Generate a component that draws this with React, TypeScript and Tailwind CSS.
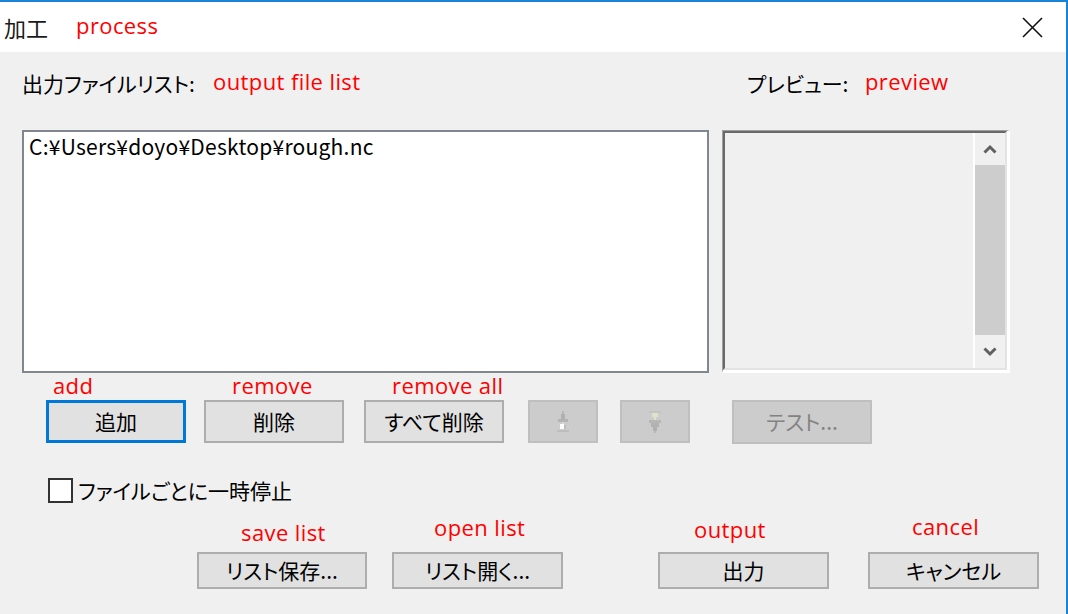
import React from 'react';

const jp = "[font-family:'Noto_Sans_CJK_JP',sans-serif] [font-feature-settings:'palt']";
const note = "[font-family:'Open_Sans',sans-serif] text-[22px] leading-[24px] tracking-[0.4px] text-[#ff0000]";

const Button = ({ label, width, focused }: { label: string; width: string; focused?: boolean }) => (
  <div
    className={`${width} h-[43px] flex items-center justify-center bg-[#e1e1e1] text-[21px] text-black ${
      focused ? 'border-[3px] border-[#0078d7]' : 'border-2 border-[#adadad]'
    }`}
  >
    {label}
  </div>
);

const UpGlyph = () => (
  <svg width="14" height="22" viewBox="0 0 14 22" shapeRendering="crispEdges">
    <rect x="6" y="0" width="2" height="3" fill="#b8b8b8" />
    <rect x="5" y="3" width="4" height="5" fill="#b0b0b0" />
    <rect x="2" y="8" width="10" height="3" fill="#b4b4b4" />
    <rect x="6" y="11" width="2" height="2" fill="#dcdcc8" />
    <rect x="4" y="13" width="4" height="5" fill="#ffffff" />
    <rect x="8" y="14" width="2" height="4" fill="#bcbcbc" />
    <rect x="1" y="19" width="12" height="2" fill="#bdbdbd" />
  </svg>
);

const DownGlyph = () => (
  <svg width="14" height="22" viewBox="0 0 14 22" shapeRendering="crispEdges">
    <rect x="1" y="0" width="12" height="2" fill="#c4c4c4" />
    <rect x="4" y="2" width="6" height="4" fill="#e2e2cc" />
    <rect x="6" y="6" width="2" height="3" fill="#e2e2cc" />
    <rect x="1" y="9" width="12" height="3" fill="#b6b6b6" />
    <rect x="3" y="12" width="8" height="4" fill="#b2b2b2" />
    <rect x="5" y="16" width="4" height="4" fill="#b0b0b0" />
    <rect x="6" y="20" width="2" height="2" fill="#b8b8b8" />
  </svg>
);

const DisabledButton = ({ width, children }: { width: string; children: React.ReactNode }) => (
  <div
    className={`${width} h-[43px] flex items-center justify-center bg-[#cccccc] border-2 border-[#bfbfbf] text-[21px] text-[#838383]`}
  >
    {children}
  </div>
);

const Chevron = ({ down }: { down?: boolean }) => (
  <svg width="14" height="10" viewBox="0 0 14 10">
    <path
      d={down ? 'M1.5 1.5 L7 7 L12.5 1.5' : 'M1.5 8.5 L7 3 L12.5 8.5'}
      fill="none"
      stroke="#606060"
      strokeWidth="3"
    />
  </svg>
);

export default function App() {
  return (
    <div className={`w-[1068px] h-[614px] overflow-hidden bg-[#f0f0f0] border-t-2 border-r-2 border-[#1883d7] ${jp} text-black`}>
      {/* title bar */}
      <div className="h-[50px] bg-white flex items-center">
        <span className="ml-[4px] text-[22px] leading-none text-[#1a1a1a]">加工</span>
        <span className={`ml-[28px] -mt-[4px] ${note}`}>process</span>
        <svg className="ml-auto mr-[23px]" width="21" height="21" viewBox="0 0 21 21">
          <path d="M1 1 L20 20 M20 1 L1 20" stroke="#111" strokeWidth="1.6" />
        </svg>
      </div>

      {/* labels */}
      <div className="h-[78px] flex items-start pt-[16px]">
        <span className="ml-[22px] w-[191px] text-[21px] leading-[30px]">出力ファイルリスト:</span>
        <span className={`${note} w-[534px] mt-[1px]`}>output file list</span>
        <span className="w-[118px] text-[21px] leading-[30px]">プレビュー:</span>
        <span className={`${note} mt-[1px]`}>preview</span>
      </div>

      {/* list + preview */}
      <div className="h-[243px] flex">
        <div className="ml-[22px] w-[687px] h-full bg-white border-2 border-[#82878f] px-[5px] pt-[1px]">
          <div className="text-[21px] leading-[26px] tracking-[0.25px]">C:¥Users¥doyo¥Desktop¥rough.nc</div>
        </div>
        <div className="ml-[13px] w-[288px] h-full border-t border-l border-[#a0a0a0] border-b-[3px] border-r-[3px] border-b-white border-r-white">
          <div className="h-full flex border-t-2 border-l-2 border-[#696969] border-b-2 border-r-2 border-b-[#e3e3e3] border-r-[#e3e3e3]">
            <div className="flex-1" />
            <div className="w-[32px] border-l-2 border-white flex flex-col">
              <div className="h-[32px] flex items-center justify-center">
                <Chevron />
              </div>
              <div className="flex-1 bg-[#cdcdcd]" />
              <div className="h-[33px] flex items-center justify-center">
                <Chevron down />
              </div>
            </div>
          </div>
        </div>
      </div>

      {/* red notes over buttons */}
      <div className="h-[27px] flex items-start">
        <span className={`ml-[53px] w-[179px] ${note}`}>add</span>
        <span className={`w-[160px] ${note}`}>remove</span>
        <span className={`${note}`}>remove all</span>
      </div>

      {/* button row */}
      <div className="h-[44px] flex items-start">
        <div className="ml-[46px]">
          <Button label="追加" width="w-[140px]" focused />
        </div>
        <div className="ml-[18px]">
          <Button label="削除" width="w-[140px]" />
        </div>
        <div className="ml-[20px]">
          <Button label="すべて削除" width="w-[140px]" />
        </div>
        <div className="ml-[24px]">
          <DisabledButton width="w-[70px]">
            <UpGlyph />
          </DisabledButton>
        </div>
        <div className="ml-[22px]">
          <DisabledButton width="w-[70px]">
            <DownGlyph />
          </DisabledButton>
        </div>
        <div className="ml-[42px]">
          <DisabledButton width="w-[140px] !h-[44px]">テスト...</DisabledButton>
        </div>
      </div>

      {/* checkbox */}
      <div className="mt-[34px] h-[24px] flex items-center">
        <div className="ml-[48px] w-[25px] h-[25px] bg-white border-2 border-[#333333]" />
        <span className="ml-[5px] text-[21px] leading-[28px]">ファイルごとに一時停止</span>
      </div>

      {/* red notes over bottom buttons */}
      <div className="h-[50px] flex items-start">
        <span className={`ml-[241px] w-[193px] mt-[18px] ${note}`}>save list</span>
        <span className={`w-[260px] mt-[13px] ${note}`}>open list</span>
        <span className={`w-[218px] mt-[15px] ${note}`}>output</span>
        <span className={`mt-[12px] ${note}`}>cancel</span>
      </div>

      {/* bottom buttons */}
      <div className="flex items-start">
        <div className="ml-[197px]">
          <Button label="リスト保存..." width="w-[170px] !h-[37px]" />
        </div>
        <div className="ml-[25px]">
          <Button label="リスト開く..." width="w-[171px] !h-[37px]" />
        </div>
        <div className="ml-[95px]">
          <Button label="出力" width="w-[171px] !h-[37px]" />
        </div>
        <div className="ml-[39px]">
          <Button label="キャンセル" width="w-[171px] !h-[37px]" />
        </div>
      </div>
    </div>
  );
}
